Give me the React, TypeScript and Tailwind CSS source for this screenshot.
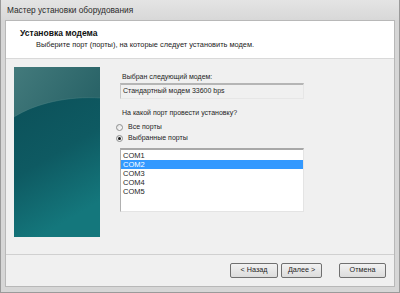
import React from "react";

const ports = ["COM1", "COM2", "COM3", "COM4", "COM5"];

const TealArt = () => (
  <svg width="86" height="170" viewBox="0 0 86 170" className="block">
    <defs>
      <linearGradient id="tealBg" x1="0" y1="0" x2="0.3" y2="1">
        <stop offset="0" stopColor="#0b4d56" />
        <stop offset="0.6" stopColor="#0e5a62" />
        <stop offset="1" stopColor="#14777c" />
      </linearGradient>
      <linearGradient id="tealTop" x1="0" y1="0" x2="1" y2="0.4">
        <stop offset="0" stopColor="#437a7c" />
        <stop offset="1" stopColor="#2a6468" />
      </linearGradient>
    </defs>
    <rect width="86" height="170" fill="url(#tealBg)" />
    <path d="M0 0 H86 V31 C55 29 22 36 0 50 Z" fill="url(#tealTop)" />
    <path d="M0 50 C22 36 55 29 86 31" stroke="#5a8f91" strokeWidth="0.6" fill="none" opacity="0.5" />
  </svg>
);

const Radio = ({ checked, label }: { checked?: boolean; label: string }) => (
  <div className="flex items-center gap-[5px] h-[11px]">
    <span className="w-[7px] h-[7px] rounded-full border border-[#8e8f8f] bg-gradient-to-br from-[#e0e0e0] to-white flex items-center justify-center">
      {checked && <span className="w-[3px] h-[3px] rounded-full bg-[#1c1c1c]" />}
    </span>
    <span>{label}</span>
  </div>
);

const Btn = ({ children, w }: { children: React.ReactNode; w: string }) => (
  <div
    className={`${w} h-[15px] border border-[#707070] rounded-[2px] bg-gradient-to-b from-[#f2f2f2] to-[#dcdcdc] flex items-center justify-center text-[7.2px] text-[#1e1e1e]`}
  >
    {children}
  </div>
);

export default function App() {
  return (
    <div
      className="w-[400px] h-[293px] bg-[#d6d6d6] flex flex-col border-l border-r border-b border-[#9a9a9a] text-[#1e1e1e] overflow-hidden"
      style={{ fontFamily: '"Liberation Sans", Arial, sans-serif' }}
    >
      <div className="h-[20px] bg-gradient-to-b from-[#e4e4e4] to-[#d8d8d8] flex items-center pl-[6px] text-[8.3px] text-[#2a2a2a]">
        Мастер установки оборудования
      </div>
      <div className="flex-1 mx-[4px] mb-[5px] flex flex-col bg-[#f0f0f0] border border-[#b8b8b8]">
        <div className="h-[38px] bg-white border-b border-[#d9d9d9] flex flex-col pl-[14px] pt-[7px]">
          <div className="text-[8.5px] font-bold leading-[11px] text-[#111]">Установка модема</div>
          <div className="text-[7.4px] leading-[11px] pl-[16px] text-[#222]">
            Выберите порт (порты), на которые следует установить модем.
          </div>
        </div>
        <div className="flex-1 flex pl-[8px] pt-[8px] text-[7px]">
          <TealArt />
          <div className="ml-[20px] w-[184px] flex flex-col">
            <div className="mt-[5px] leading-[10px] pl-[2px]">Выбран следующий модем:</div>
            <div className="mt-[1px] h-[16px] border-t-2 border-[#b5b5b5] border-l border-r border-b border-l-[#c8c8c8] border-r-[#e6e6e6] border-b-[#e6e6e6] bg-[#f0f0f0] flex items-center pl-[2px]">
              Стандартный модем 33600 bps
            </div>
            <div className="mt-[9px] leading-[10px] pl-[2px]">На какой порт провести установку?</div>
            <div className="mt-[4px] flex flex-col -ml-[4px]">
              <Radio label="Все порты" />
              <Radio checked label="Выбранные порты" />
            </div>
            <div className="mt-[4px] h-[64px] bg-white border-t-2 border-[#a8a8a8] border-l border-l-[#b0b0b0] border-r border-r-[#e4e4e4] border-b border-b-[#e4e4e4] flex flex-col pt-[1px]">
              {ports.map((p) => (
                <div
                  key={p}
                  className={`h-[9px] leading-[9px] pl-[2px] text-[7.5px] ${p === "COM2" ? "bg-[#3399ff] text-white" : ""}`}
                >
                  {p}
                </div>
              ))}
            </div>
          </div>
        </div>
        <div className="h-[32px] border-t border-[#d0d0d0] flex items-center justify-end pr-[8px] pb-[1px]">
          <div className="flex items-center">
            <Btn w="w-[48px]">&lt; Назад</Btn>
            <div className="w-[3px]" />
            <Btn w="w-[41px]">Далее &gt;</Btn>
            <div className="w-[17px]" />
            <Btn w="w-[47px]">Отмена</Btn>
          </div>
        </div>
      </div>
    </div>
  );
}
